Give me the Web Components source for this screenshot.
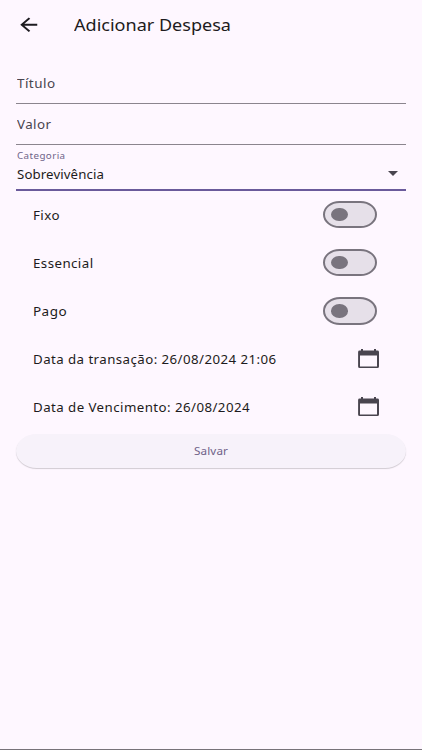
<!DOCTYPE html>
<html lang="pt-BR"><head><meta charset="utf-8"><title>Adicionar Despesa</title>
<style>
html,body{margin:0;height:100%}
body{background:#fef7ff;font-family:"Noto Sans","Open Sans",sans-serif;color:#1d1b20}
</style></head><body>
<expense-page></expense-page>
<script>
const define=(name,html,setup)=>customElements.define(name,class extends HTMLElement{
  connectedCallback(){
    if(this.shadowRoot)return;
    const t=document.createElement('template');t.innerHTML=html;
    this.attachShadow({mode:'open'}).append(t.content.cloneNode(true));
    if(setup)setup(this,this.shadowRoot);
  }
});

// Text stretched horizontally to a given advance width.
define('wide-text',`<style>
:host{display:block;white-space:nowrap;line-height:20px;height:20px}
span{display:inline-block;transform-origin:0 50%}
</style><span><slot></slot></span>`,(el,root)=>{
  const s=root.querySelector('span'),w=+el.getAttribute('w');
  el.style.width=w+'px';
  el.style.fontSize=(el.getAttribute('size')||12.2)+'px';
  el.style.letterSpacing=(el.getAttribute('track')||0.4)+'px';
  s.style.transform='scaleX('+w/s.getBoundingClientRect().width+')';
});

define('app-bar',`<style>
:host{display:flex;align-items:center;height:49px;padding-left:16.3px;box-sizing:border-box}
svg{width:25.5px;height:21.5px;margin-right:32px;display:block}
</style><svg viewBox="0 0 24 24" preserveAspectRatio="none" fill="#1d1b20"><path d="M20 11H7.83l5.59-5.59L12 4l-8 8 8 8 1.41-1.41L7.83 13H20v-2z"/></svg><slot></slot>`);

define('text-field',`<style>
:host{display:flex;align-items:center;height:41px;box-sizing:border-box;border-bottom:1px solid #8b858e;color:#49454f;padding:2px 0 0 .6px}
</style><slot></slot>`);

define('select-field',`<style>
:host{display:grid;grid-template-columns:1fr auto;grid-template-rows:19px 1fr;height:46px;box-sizing:border-box;border-bottom:2px solid #6a5a9b;padding:1px 0 0 .5px}
::slotted([slot=label]){grid-column:1/3;color:#6f6389}
svg{width:10px;height:5px;margin:6px 8px 0 0}
</style><slot name="label"></slot><slot></slot><svg viewBox="0 0 10 5" preserveAspectRatio="none"><path d="M0 0h10L5 5z" fill="#49454f"/></svg>`);

define('list-row',`<style>
:host{display:flex;align-items:center;justify-content:space-between;height:48.1px;padding:0 29px 0 17px;box-sizing:border-box}
::slotted(wide-text){margin-top:2px}
::slotted([slot=end]){margin-bottom:1px}
</style><slot></slot><slot name="end"></slot>`);

define('toggle-switch',`<style>
:host{display:flex;align-items:center;box-sizing:border-box;width:54px;height:27.6px;border:2px solid #79747e;border-radius:17px/14px;background:#e6e0e9;padding-left:6.5px}
i{width:16.5px;height:13.6px;border-radius:50%;background:#79747e}
</style><i></i>`);

define('calendar-icon',`<style>:host{display:block;margin-right:-5px}svg{display:block;width:25px;height:21px;margin-right:1px}</style>
<svg viewBox="0 0 25 21" fill="#49454f"><path fill-rule="evenodd" d="M5 1h2v1.6h11V1h2v1.6h1.4q1.6 0 1.6 1.4v14.5q0 1.5-1.6 1.5H3.7Q2.1 20 2.1 18.5V4q0-1.400 1.600-1.400H5zM4 7.500V18.500H21V7.500z"/></svg>`);

define('pill-button',`<style>
:host{display:flex;align-items:center;justify-content:center;height:34px;border-radius:21px/17px;background:#f7f2fa;color:#6f6389;box-shadow:0 1px 1px rgba(0,0,0,.18)}
</style><slot></slot>`);

define('expense-page',`<style>
:host{display:flex;flex-direction:column;height:100vh;box-sizing:border-box;border-bottom:1px solid #777279}
main{padding:14px 16.5px 0 16.4px}
pill-button{margin-top:3px}
</style>
<app-bar><wide-text w="157" size="16.6" track="0">Adicionar Despesa</wide-text></app-bar>
<main>
<text-field><wide-text w="38.5">Título</wide-text></text-field>
<text-field><wide-text w="34.5">Valor</wide-text></text-field>
<select-field><wide-text slot="label" w="48.5" size="9.4">Categoria</wide-text><wide-text w="87" track="0.1">Sobrevivência</wide-text></select-field>
<list-row><wide-text w="27">Fixo</wide-text><toggle-switch slot="end"></toggle-switch></list-row>
<list-row><wide-text w="60.5">Essencial</wide-text><toggle-switch slot="end"></toggle-switch></list-row>
<list-row><wide-text w="34">Pago</wide-text><toggle-switch slot="end"></toggle-switch></list-row>
<list-row><wide-text w="243.5">Data da transação: 26/08/2024 21:06</wide-text><calendar-icon slot="end"></calendar-icon></list-row>
<list-row><wide-text w="217">Data de Vencimento: 26/08/2024</wide-text><calendar-icon slot="end"></calendar-icon></list-row>
<pill-button><wide-text w="34" size="10.4" track="0.1">Salvar</wide-text></pill-button>
</main>`);
</script></body></html>
